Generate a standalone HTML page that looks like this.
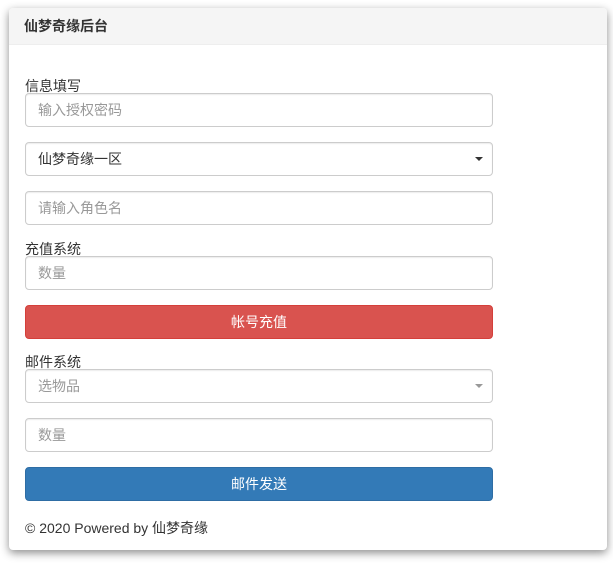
<!DOCTYPE html>
<html><head><meta charset="utf-8"><style>
body{margin:0;background:#fff;font-family:"Liberation Sans","Noto Sans CJK SC",sans-serif;font-size:14px;color:#333;width:613px;height:565px;overflow:hidden;position:relative}
.panel{position:absolute;left:9px;top:8px;width:598px;height:542px;background:#fff;border-radius:4px;box-shadow:0 3px 9px rgba(0,0,0,.45)}
.hd{height:36px;background:#f5f5f5;border-bottom:1px solid #eee;border-radius:4px 4px 0 0;font-weight:bold;font-size:14px;line-height:36px;padding-left:15px;color:#333}
.ab{position:absolute;left:16px;width:468px}
.in{height:32px;border:1px solid #ccc;border-radius:4px;box-shadow:inset 0 1px 1px rgba(0,0,0,.075);line-height:32px;padding-left:12px;color:#999;box-sizing:content-box;width:454px}
.lb{line-height:16px}
.btn{height:34px;border-radius:4px;color:#fff;text-align:center;line-height:34px}
.car{position:absolute;right:9px;top:14px;width:0;height:0;border-left:4px solid transparent;border-right:4px solid transparent;border-top:4px solid #333}
</style></head><body>
<div class="panel">
<div class="hd">仙梦奇缘后台</div>
<div class="ab lb" style="top:70px">信息填写</div>
<div class="ab in" style="top:85px">输入授权密码</div>
<div class="ab in" style="top:134px;color:#333">仙梦奇缘一区<span class="car"></span></div>
<div class="ab in" style="top:183px">请输入角色名</div>
<div class="ab lb" style="top:233px">充值系统</div>
<div class="ab in" style="top:248px">数量</div>
<div class="ab btn" style="top:297px;background:#d9534f;border:1px solid #d43f3a;height:32px;line-height:32px;width:466px">帐号充值</div>
<div class="ab lb" style="top:346px">邮件系统</div>
<div class="ab in" style="top:361px">选物品<span class="car" style="border-top-color:#999"></span></div>
<div class="ab in" style="top:410px">数量</div>
<div class="ab btn" style="top:459px;background:#337ab7;border:1px solid #2e6da4;height:32px;line-height:32px;width:466px">邮件发送</div>
<div class="ab" style="top:510px">© 2020 Powered by 仙梦奇缘</div>
</div>
</body></html>
